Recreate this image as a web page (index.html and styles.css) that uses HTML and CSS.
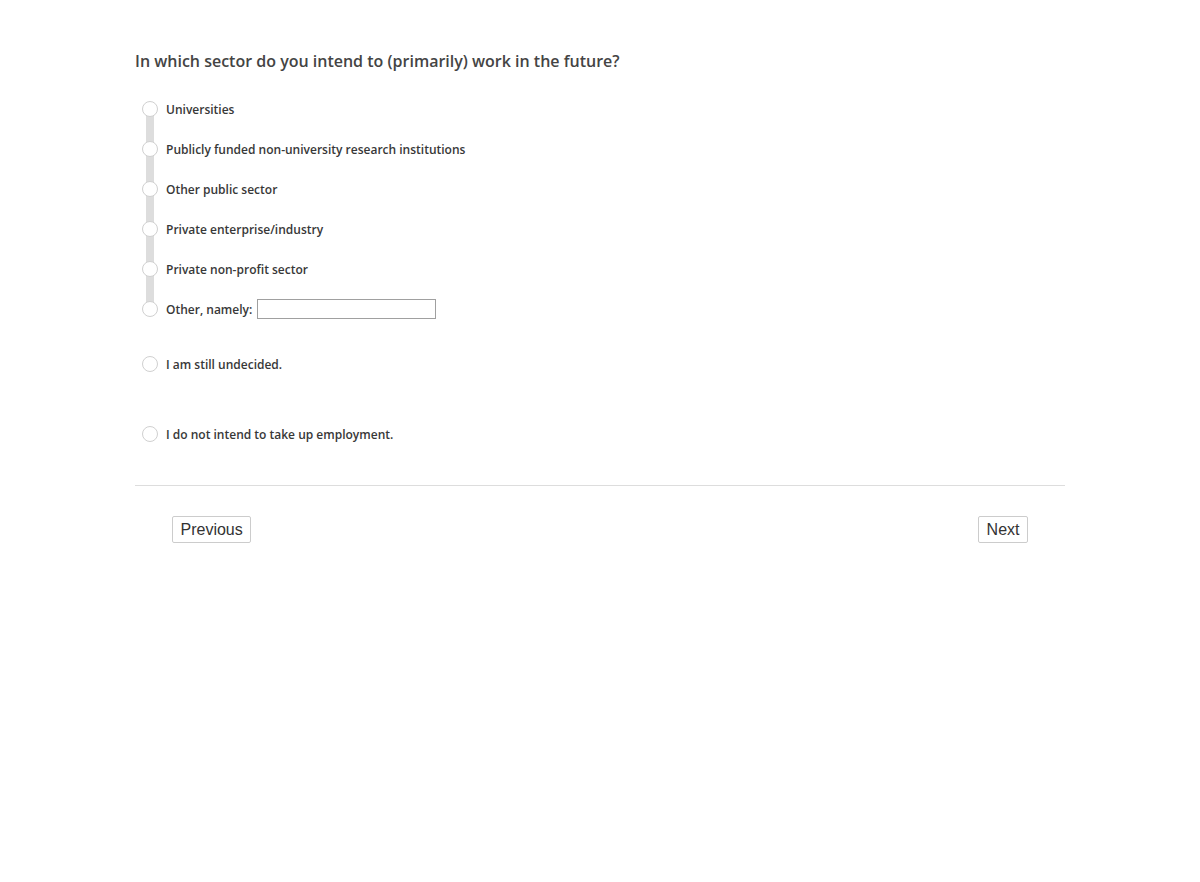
FILE: index.html
```html
<!DOCTYPE html>
<html lang="en">
<head>
<meta charset="utf-8">
<title>Survey</title>
<link rel="stylesheet" href="styles.css">
</head>
<body>
<main class="page">
  <h1 class="question">In which sector do you intend to (primarily) work in the future?</h1>
  <div class="group">
    <label class="opt first"><span class="track"><span class="radio"></span></span><span class="lbl">Universities</span></label>
    <label class="opt mid"><span class="track"><span class="radio"></span></span><span class="lbl">Publicly funded non-university research institutions</span></label>
    <label class="opt mid"><span class="track"><span class="radio"></span></span><span class="lbl">Other public sector</span></label>
    <label class="opt mid"><span class="track"><span class="radio"></span></span><span class="lbl">Private enterprise/industry</span></label>
    <label class="opt mid"><span class="track"><span class="radio"></span></span><span class="lbl">Private non-profit sector</span></label>
    <label class="opt last"><span class="track"><span class="radio"></span></span><span class="lbl">Other, namely:</span><span class="textbox"></span></label>
  </div>
  <div class="single s1">
    <label class="opt"><span class="track"><span class="radio"></span></span><span class="lbl">I am still undecided.</span></label>
  </div>
  <div class="single s2">
    <label class="opt"><span class="track"><span class="radio"></span></span><span class="lbl">I do not intend to take up employment.</span></label>
  </div>
  <hr class="rule">
  <div class="nav">
    <button class="btn">Previous</button>
    <button class="btn">Next</button>
  </div>
</main>
</body>
</html>
```
FILE: styles.css
```css
html, body {
  margin: 0;
  padding: 0;
  background: #fff;
}
body {
  font-family: "Open Sans", "Liberation Sans", sans-serif;
  color: #444;
}
.page {
  width: 930px;
  margin: 0 auto;
  padding-top: 49px;
}
.question {
  margin: 0;
  font-size: 16px;
  font-weight: 600;
  line-height: 24px;
  color: #444;
}
.group {
  margin-top: 16px;
  display: flex;
  flex-direction: column;
}
.opt {
  display: flex;
  align-items: center;
  height: 40px;
  padding-left: 7px;
  font-size: 12px;
  font-weight: 600;
  color: #383838;
}
.track {
  width: 16px;
  height: 40px;
  display: flex;
  align-items: center;
  justify-content: center;
  margin-right: 8px;
  background-repeat: no-repeat;
}
.first .track {
  background-image: linear-gradient(#ddd, #ddd);
  background-size: 8px 20px;
  background-position: 4px 20px;
}
.mid .track {
  background-image: linear-gradient(#ddd, #ddd);
  background-size: 8px 40px;
  background-position: 4px 0;
}
.last .track {
  background-image: linear-gradient(#ddd, #ddd);
  background-size: 8px 20px;
  background-position: 4px 0;
}
.radio {
  width: 14px;
  height: 14px;
  border: 1px solid #d0d0d0;
  border-radius: 50%;
  background: #fff;
}
.lbl {
  white-space: nowrap;
}
.textbox {
  display: inline-block;
  width: 177px;
  height: 18px;
  margin-left: 5px;
  border: 1px solid #a0a0a0;
  background: #fff;
}
.single.s1 {
  margin-top: 15px;
}
.single.s2 {
  margin-top: 30px;
}
.rule {
  margin: 31px 0 0;
  border: 0;
  border-top: 1px solid #ddd;
  height: 0;
}
.nav {
  display: flex;
  justify-content: space-between;
  padding: 30px 37px 0;
}
.btn {
  font-family: "Liberation Sans", Arial, sans-serif;
  font-size: 16px;
  color: #333;
  background: #fff;
  border: 1px solid #ccc;
  border-radius: 2px;
  padding: 3px 7.5px;
  line-height: 19px;
  cursor: pointer;
}
```
